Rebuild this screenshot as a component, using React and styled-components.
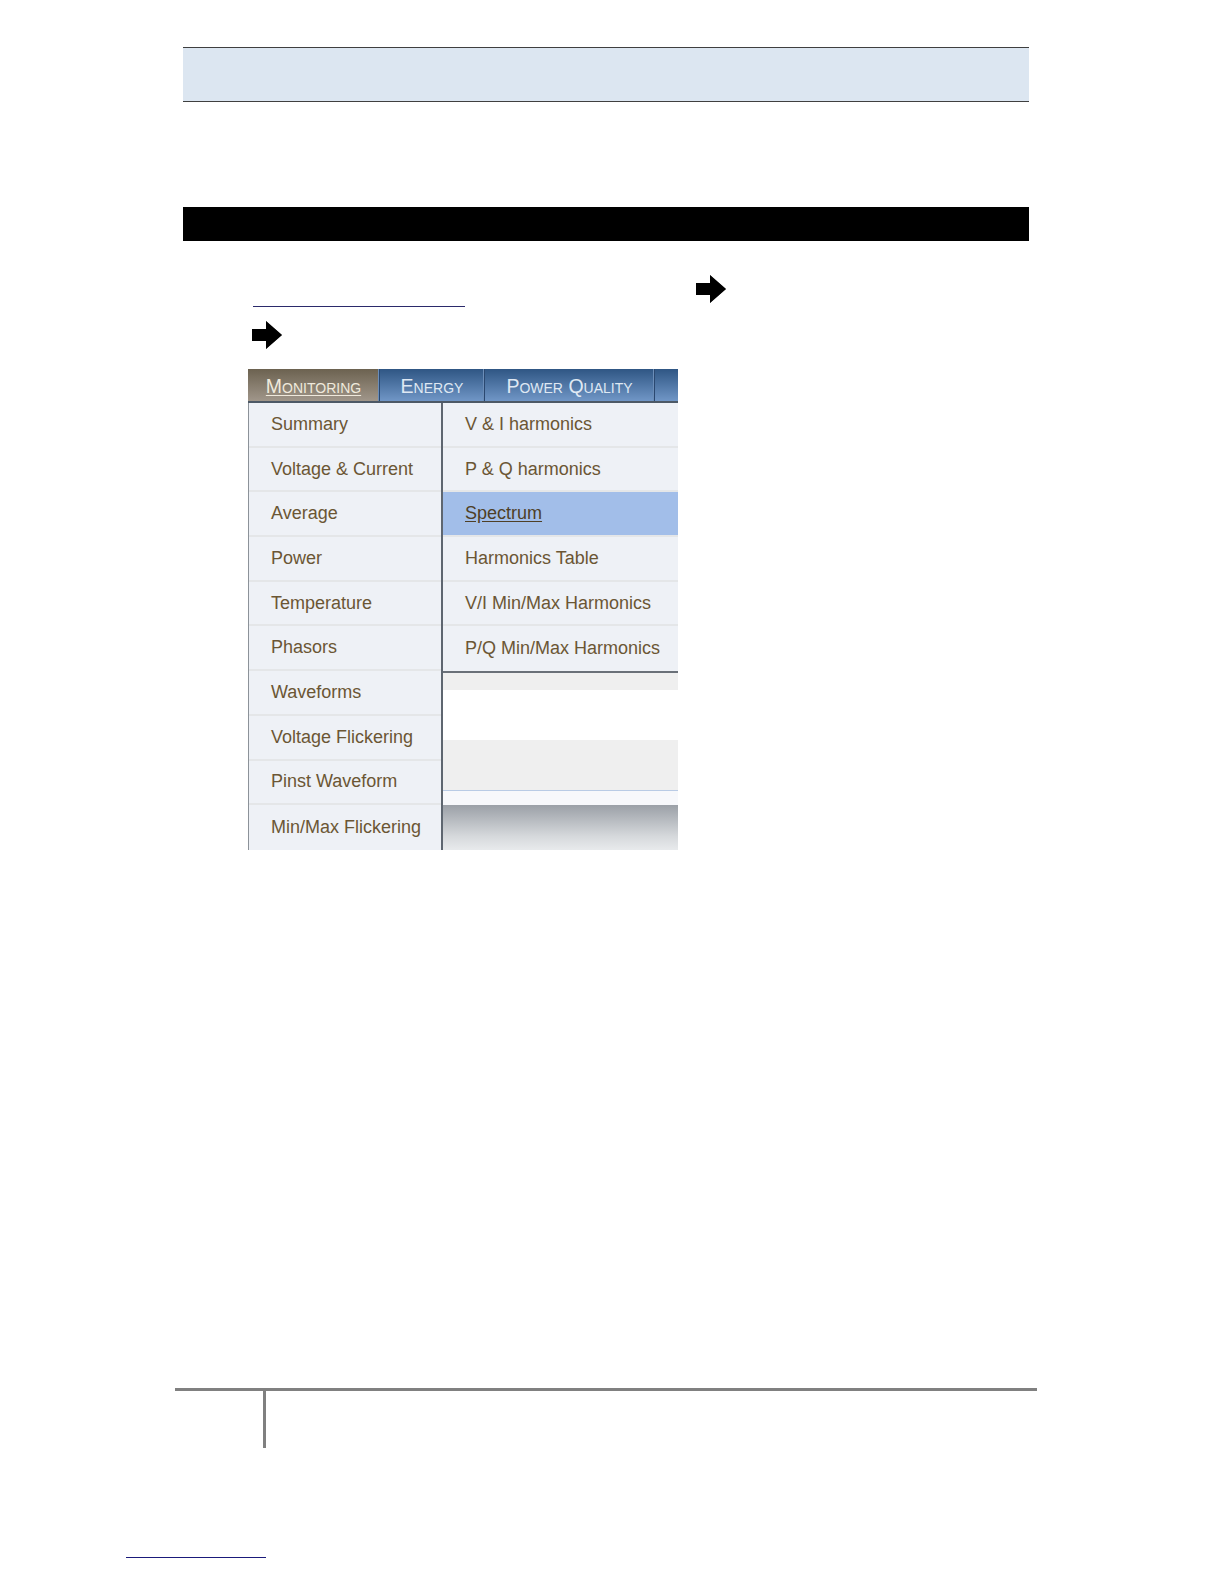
import React from "react";
import styled, { createGlobalStyle } from "styled-components";

const mainItems = [
  "Summary",
  "Voltage & Current",
  "Average",
  "Power",
  "Temperature",
  "Phasors",
  "Waveforms",
  "Voltage Flickering",
  "Pinst Waveform",
  "Min/Max Flickering",
];

const subItems = [
  "V & I harmonics",
  "P & Q harmonics",
  "Spectrum",
  "Harmonics Table",
  "V/I Min/Max Harmonics",
  "P/Q Min/Max Harmonics",
];

const Arrow = () => (
  <svg width="32" height="30" viewBox="0 0 32 30">
    <path d="M1 9 H15 V1 L31 15 L15 29 V21 H1 Z" fill="#000" />
  </svg>
);

const App = () => {
  return (
    <Page>
      <GlobalStyle />
      <Content>
        <HeaderBox />
        <SectionBar />
        <FirstLine>
          <LinkLine />
          <ArrowSlot $left={230}>
            <Arrow />
          </ArrowSlot>
        </FirstLine>
        <SecondLine>
          <ArrowSlot $left={68}>
            <Arrow />
          </ArrowSlot>
        </SecondLine>

        <MenuShot>
          <TabBar>
            <Tab $active $width={132}>Monitoring</Tab>
            <Tab $width={105}>Energy</Tab>
            <Tab $width={170}>Power Quality</Tab>
            <Tab $width={23} />
          </TabBar>
          <MenuBody>
            <MainColumn>
              {mainItems.map((item) => (
                <MenuItem key={item}>{item}</MenuItem>
              ))}
            </MainColumn>
            <SubColumn>
              <SubList>
                {subItems.map((item) => (
                  <MenuItem key={item} $selected={item === "Spectrum"}>
                    {item}
                  </MenuItem>
                ))}
              </SubList>
              <PageBand $bg="#efefef" $h={17} />
              <PageBand $bg="#ffffff" $h={50} />
              <PageBand $bg="#efefef" $h={50} />
              <PageBand $bg="#f7f8fb" $h={14} $line />
              <BottomShade />
            </SubColumn>
          </MenuBody>
        </MenuShot>
      </Content>

      <Footer>
        <FooterRule />
        <FooterStem />
      </Footer>
      <FootnoteLine />
    </Page>
  );
};

/**
 *  STYLES
 */
const GlobalStyle = createGlobalStyle`
  body {
    margin: 0;
    background: #fff;
    font-family: "Liberation Sans", Arial, sans-serif;
  }
`;

const Page = styled.div`
  display: flex;
  flex-direction: column;
  padding-top: 47px;
`;

const Content = styled.div`
  display: flex;
  flex-direction: column;
  width: 846px;
  margin-left: 183px;
`;

const HeaderBox = styled.div`
  height: 53px;
  background: #dce6f1;
  border-top: 1px solid #3f3f3f;
  border-bottom: 1px solid #3f3f3f;
`;

const SectionBar = styled.div`
  height: 34px;
  margin-top: 105px;
  background: #000;
`;

const FirstLine = styled.div`
  display: flex;
  align-items: flex-end;
  height: 34px;
  margin-top: 33px;
`;

const SecondLine = styled.div`
  display: flex;
  height: 30px;
  margin-top: 12px;
`;

const LinkLine = styled.div`
  width: 212px;
  margin-left: 70px;
  margin-bottom: 1px;
  border-bottom: 1px solid #2b2a6b;
`;

const ArrowSlot = styled.div`
  align-self: flex-start;
  margin-left: ${(p) => p.$left}px;
  line-height: 0;
  filter: drop-shadow(0 0 0.6px rgba(0, 0, 0, 0.6));
`;

const MenuShot = styled.div`
  display: flex;
  flex-direction: column;
  width: 430px;
  height: 481px;
  margin-top: 19px;
  margin-left: 65px;
  overflow: hidden;
`;

const TabBar = styled.div`
  display: flex;
  height: 34px;
  box-sizing: border-box;
  border-bottom: 2px solid #4d5966;
  background: linear-gradient(#2c5381, #5f86b6);
`;

const Tab = styled.div`
  display: flex;
  align-items: center;
  justify-content: center;
  flex: none;
  width: ${(p) => p.$width}px;
  box-sizing: border-box;
  padding-top: 2px;
  border-right: 1px solid #2a4870;
  box-shadow: inset -1px 0 0 #6b8db8;
  font-size: 19.5px;
  font-variant: small-caps;
  color: ${(p) => (p.$active ? "#efe9dc" : "#dfe8f3")};
  text-decoration: ${(p) => (p.$active ? "underline" : "none")};
  text-underline-offset: 2px;
  white-space: nowrap;
  background: ${(p) =>
    p.$active
      ? "linear-gradient(#6c6250, #a0968a)"
      : "linear-gradient(#2f5684, #7096c6)"};
  &:last-child {
    border-right: none;
    box-shadow: none;
  }
`;

const MenuBody = styled.div`
  display: grid;
  grid-template-columns: 193px 237px;
  flex: 1;
`;

const MainColumn = styled.div`
  display: flex;
  flex-direction: column;
  border-left: 1px solid #8c9299;
  background: #eef1f6;
`;

const SubColumn = styled.div`
  display: flex;
  flex-direction: column;
  border-left: 2px solid #5e6670;
`;

const SubList = styled.div`
  display: flex;
  flex-direction: column;
  border-bottom: 2px solid #6a7078;
`;

const MenuItem = styled.div`
  display: flex;
  align-items: center;
  height: 44.7px;
  box-sizing: border-box;
  padding-left: 22px;
  border-bottom: 2px solid #e4e6e8;
  background: ${(p) => (p.$selected ? "#a2bee9" : "#eef1f6")};
  color: ${(p) => (p.$selected ? "#4e3f26" : "#6b5634")};
  text-decoration: ${(p) => (p.$selected ? "underline" : "none")};
  text-underline-offset: 2px;
  font-size: 18px;
  white-space: nowrap;
  &:last-child {
    border-bottom: none;
  }
`;

const PageBand = styled.div`
  height: ${(p) => p.$h}px;
  background: ${(p) => p.$bg};
  border-top: ${(p) => (p.$line ? "1px solid #b9cbe5" : "none")};
`;

const BottomShade = styled.div`
  flex: 1;
  background: linear-gradient(#9ba0a7, #d6d9dc 70%, #e8eaec);
`;

const Footer = styled.div`
  display: flex;
  flex-direction: column;
  width: 862px;
  margin-top: 538px;
  margin-left: 175px;
`;

const FooterRule = styled.div`
  height: 3px;
  background: #808080;
`;

const FooterStem = styled.div`
  width: 3px;
  height: 57px;
  margin-left: 88px;
  background: #808080;
`;

const FootnoteLine = styled.div`
  width: 140px;
  margin-top: 109px;
  margin-left: 126px;
  border-bottom: 1px solid #1a1a7a;
`;

export default App;
